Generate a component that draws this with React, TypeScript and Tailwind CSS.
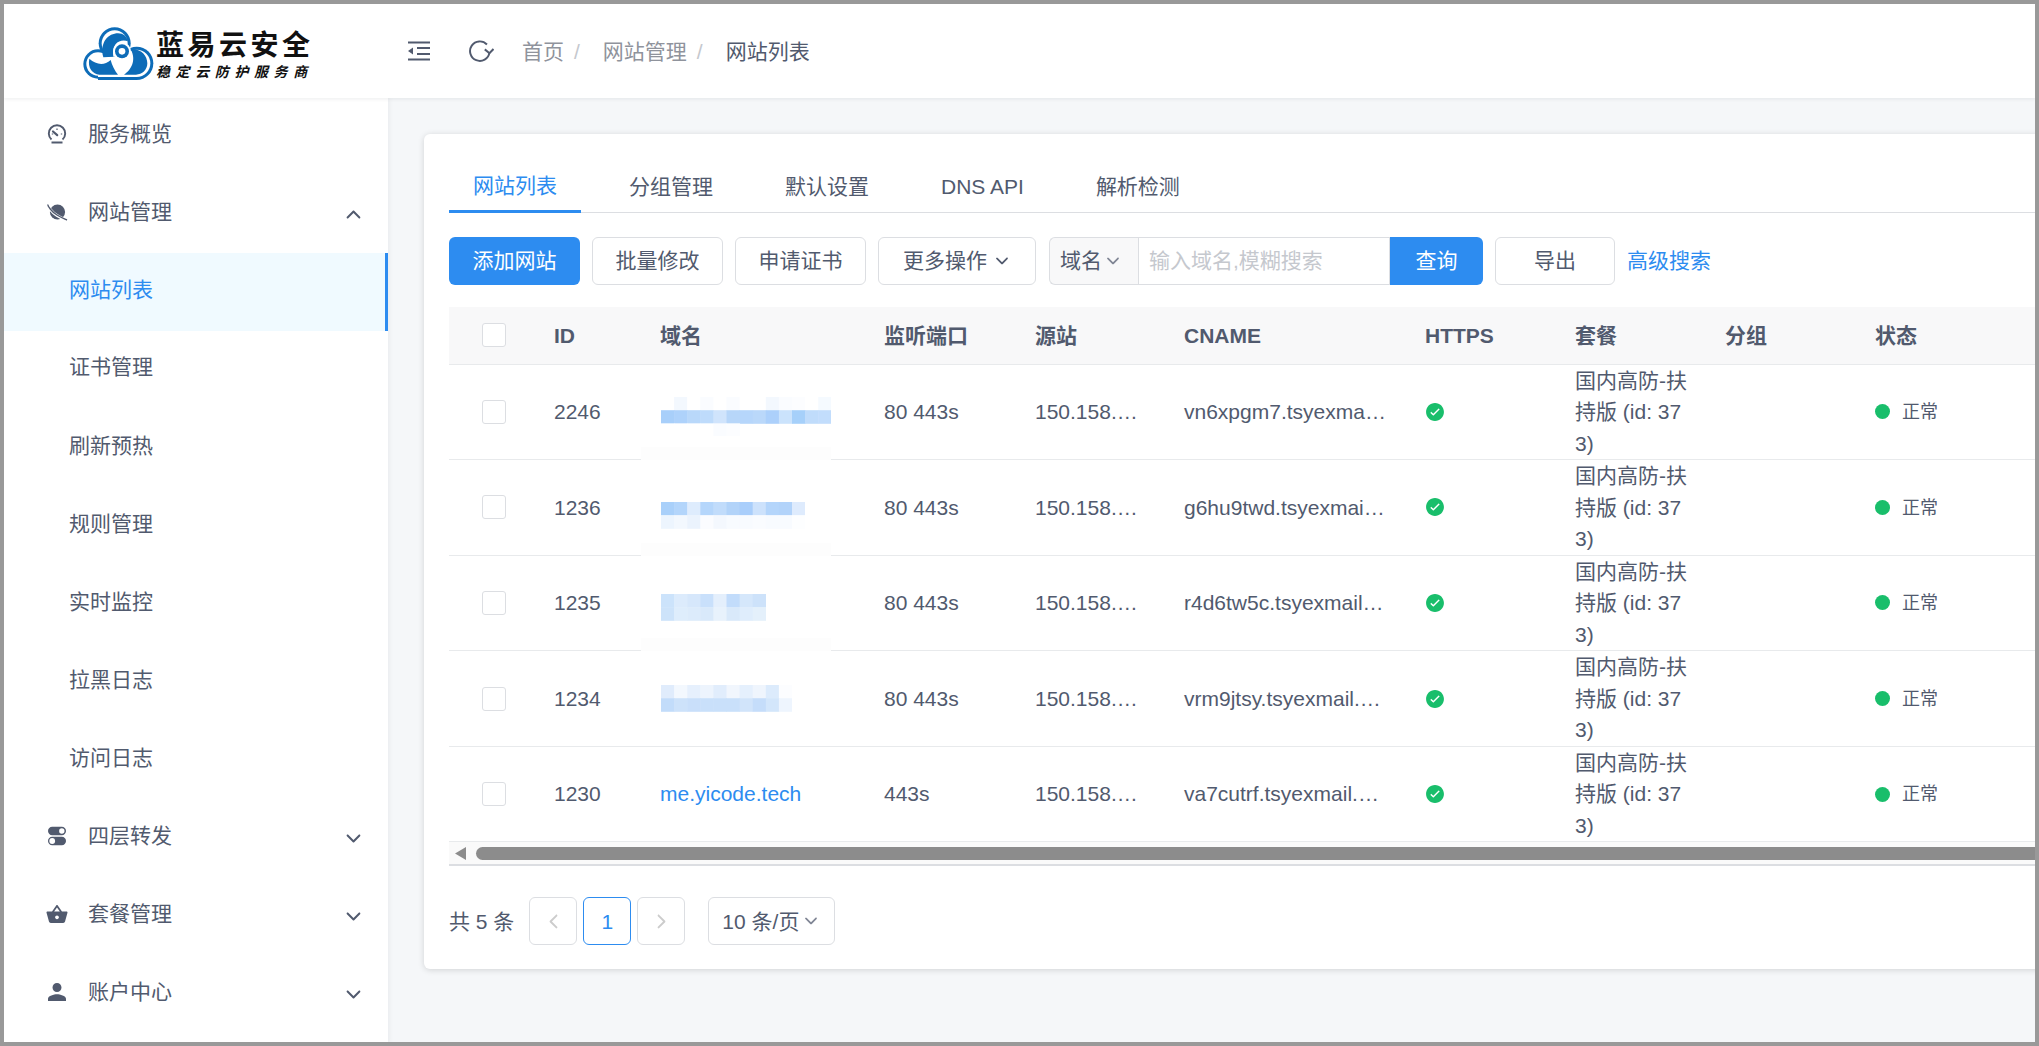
import { IoIosArrowBack, IoIosArrowDown, IoIosArrowForward, IoIosArrowUp, IoIosCheckmarkCircle, IoMdBasket, IoMdPerson } from 'react-icons/io';
import type { ComponentType } from 'react';

type NavItem = { label: string; icon?: ComponentType<{ className?: string }>; arrow?: 'up' | 'down'; active?: boolean; box?: string };

const GaugeIcon = ({ className }: { className?: string }) => (
  <svg viewBox="0 0 24 24" className={className} fill="none" stroke="currentColor">
    <path d="M6.5 17.5 A8.2 8.2 0 1 1 17.5 17.5" strokeWidth="1.9" />
    <path d="M8 9.5 L12.2 13.2" strokeWidth="2.2" strokeLinecap="round" />
    <path d="M12 6.5 V8 M17.2 12 H15.8 M6.8 12 H8.2" strokeWidth="1.2" />
    <path d="M6.5 20.5 H17.5" strokeWidth="2" />
  </svg>
);

const PlanetIcon = ({ className }: { className?: string }) => (
  <svg viewBox="0 0 24 24" className={className} fill="currentColor">
    <circle cx="12.5" cy="12" r="7.6" />
    <path d="M2.5 4 C2 6 7 12.5 12 15.5 C16.5 18.2 20 19.5 22 20.5" fill="none" stroke="#fff" strokeWidth="3" />
    <path d="M3 4.5 C2.5 6 7 12 12 15 C16.5 17.7 20 19 22 20" fill="none" stroke="currentColor" strokeWidth="1.4" />
  </svg>
);

const SwitchIcon = ({ className }: { className?: string }) => (
  <svg viewBox="0 0 24 24" className={className}>
    <rect x="3" y="2.8" width="18" height="8.4" rx="4.2" fill="currentColor" />
    <circle cx="16.8" cy="7" r="2.7" fill="#fff" />
    <rect x="3" y="12.8" width="18" height="8.4" rx="4.2" fill="currentColor" />
    <circle cx="7.2" cy="17" r="2.9" fill="#fff" />
  </svg>
);

const navItems: NavItem[] = [
  { label: '服务概览', icon: GaugeIcon },
  { label: '网站管理', icon: PlanetIcon, arrow: 'up', box: 'h-[80px] pb-[2px]' },
  { label: '网站列表', active: true, box: 'h-[78px] pb-[5px]' },
  { label: '证书管理', box: 'h-[76px] pb-[4px]' },
  { label: '刷新预热' },
  { label: '规则管理' },
  { label: '实时监控' },
  { label: '拉黑日志' },
  { label: '访问日志' },
  { label: '四层转发', icon: SwitchIcon, arrow: 'down' },
  { label: '套餐管理', icon: IoMdBasket, arrow: 'down' },
  { label: '账户中心', icon: IoMdPerson, arrow: 'down' },
];

type Mosaic = { rows: string[][]; top: string; mask: boolean };

const mosaics: Mosaic[] = [
  {
    top: 'mt-[9px]',
    mask: true,
    rows: [
      ['#ffffff', '#f3f8fe', '#ffffff', '#fafcff', '#ffffff', '#fafcff', '#ffffff', '#ffffff', '#f3f8fe', '#fafcff', '#fcfdff', '#ffffff', '#f5faff'],
      ['#a8cffa', '#aed2fb', '#b9d8fa', '#bedbfb', '#d0e4fc', '#b7d6f9', '#b6d6fb', '#bad8fa', '#acd0fb', '#cbe3fc', '#a6d0fa', '#c0dcfb', '#c2ddfc'],
      ['#ffffff', '#ffffff', '#ffffff', '#ffffff', '#fafcff', '#fcfdff'],
    ],
  },
  {
    top: 'mt-[16px]',
    mask: true,
    rows: [
      ['#a9d0fa', '#b3d5fb', '#deecfd', '#b5d6fb', '#c1dcfb', '#b2d3f9', '#a9cefb', '#cde2fc', '#b4d5fb', '#b2d3fa', '#deebfd'],
      ['#edf5fe', '#f3f8fe', '#ebf3fd', '#fbfcff', '#f4f8fe', '#f8fbff', '#f8fbff', '#fafcff', '#f8fbff', '#f8fbff', '#fdfeff'],
    ],
  },
  {
    top: 'mt-[9px]',
    mask: true,
    rows: [
      ['#cce3fb', '#dcebfc', '#d6e7fb', '#c9e0fb', '#e4effc', '#c2dcfb', '#d5e7fb', '#cde2fa'],
      ['#cde3fa', '#deedfc', '#dcebfb', '#d9e9fa', '#e8f2fc', '#d9e9fa', '#dfedfc', '#e4f0fb'],
    ],
  },
  {
    top: 'mt-0',
    mask: false,
    rows: [
      ['#e0ecfc', '#f3f8fe', '#e6f0fd', '#edf4fd', '#e1edfc', '#f1f6fd', '#e5f0fd', '#eff5fd', '#dcebfc', '#fcfdff'],
      ['#c2dcfa', '#cde2fa', '#c9dffa', '#c9e0fa', '#c9e0fa', '#c9e0fa', '#d1e4fa', '#c5ddfa', '#d3e6fb', '#eef5fe'],
    ],
  },
];

const sites = [
  { id: 2246, ports: '80 443s', cname: 'vn6xpgm7.tsyexmail.com', mosaic: mosaics[0] },
  { id: 1236, ports: '80 443s', cname: 'g6hu9twd.tsyexmail.com', mosaic: mosaics[1] },
  { id: 1235, ports: '80 443s', cname: 'r4d6tw5c.tsyexmail.com', mosaic: mosaics[2] },
  { id: 1234, ports: '80 443s', cname: 'vrm9jtsy.tsyexmail.com', mosaic: mosaics[3] },
  { id: 1230, ports: '443s', cname: 'va7cutrf.tsyexmail.com', domain: 'me.yicode.tech' },
];

const Logo = () => (
  <svg viewBox="20 14 216 168" className="w-[72px] h-[56px] shrink-0">
    <g fill="#0d6cb8">
      <circle cx="68" cy="128" r="44" />
      <circle cx="118" cy="66" r="48" />
      <circle cx="184" cy="126" r="50" />
      <rect x="68" y="110" width="116" height="66" />
    </g>
    <g fill="#fff">
      <circle cx="68" cy="128" r="35" />
      <circle cx="118" cy="66" r="39" />
      <circle cx="184" cy="126" r="41" />
      <rect x="68" y="105" width="116" height="62" />
    </g>
    <g fill="#0d6cb8">
      <path d="M42 112 C36 140 52 158 72 160 L128 160 C118 148 110 132 106 116 C86 134 62 130 42 112 Z" />
      <path d="M166 84 C196 80 216 102 216 126 C216 146 200 160 182 160 L146 160 C168 146 184 116 166 84 Z" />
      <path d="M84 108 C72 62 100 36 128 36 C144 36 154 44 158 60 C136 52 108 64 114 106 Z" />
    </g>
    <circle cx="140" cy="90" r="27" fill="#fff" />
    <circle cx="140" cy="90" r="21" fill="#0d6cb8" />
    <circle cx="140" cy="90" r="10" fill="#fff" />
  </svg>
);

const CollapseIcon = () => (
  <svg viewBox="0 0 22 20" className="w-[22px] h-[20px]" fill="#515a6e">
    <rect x="0" y="0.5" width="22" height="2" />
    <rect x="9" y="6" width="13" height="2" />
    <rect x="9" y="12" width="13" height="2" />
    <rect x="0" y="17.5" width="22" height="2" />
    <path d="M0 10 L5 6.5 V13.5 Z" />
  </svg>
);

const RefreshIcon = () => (
  <svg viewBox="0 0 24 22" className="w-[26px] h-[24px] ml-[38px]" fill="none" stroke="#515a6e" strokeWidth="1.8">
    <path d="M17.5 5 A9 9 0 1 0 19.8 12.5" />
    <path d="M15.5 9.5 L19.8 13 L23.5 9.2" />
  </svg>
);

const Checkbox = () => <span className="block w-6 h-6 bg-white border border-[#dcdee2] rounded-[3px]" />;

const Button = ({ children, className = '' }: { children: React.ReactNode; className?: string }) => (
  <button className={`h-12 rounded-md border border-[#dcdee2] bg-white text-[21px] text-[#515a6e] flex items-center justify-center ${className}`}>
    {children}
  </button>
);

const tabs = ['网站列表', '分组管理', '默认设置', 'DNS API', '解析检测'];
const headers = [
  { label: 'ID', width: 'w-[106px]' },
  { label: '域名', width: 'w-[224px]' },
  { label: '监听端口', width: 'w-[151px]' },
  { label: '源站', width: 'w-[149px]' },
  { label: 'CNAME', width: 'w-[241px]' },
  { label: 'HTTPS', width: 'w-[150px]' },
  { label: '套餐', width: 'w-[150px]' },
  { label: '分组', width: 'w-[150px]' },
  { label: '状态', width: 'w-[150px]' },
];

export default function App() {
  return (
    <div className="h-screen w-screen overflow-hidden border-4 border-[#999999] bg-[#f5f7f9] flex flex-col text-[21px] text-[#515a6e] font-['Liberation_Sans','Noto_Sans_CJK_SC',sans-serif]">
      <header className="relative z-10 h-[94px] shrink-0 bg-white shadow-[0_1px_4px_rgba(0,21,41,0.08)] flex items-center">
        <div className="w-[384px] shrink-0 flex items-center pl-[78px] pt-[5px]">
          <Logo />
          <div className="flex flex-col ml-[2px] mt-[3px] text-[#111111]">
            <span className="text-[28px] leading-[34px] font-bold tracking-[3.5px] whitespace-nowrap">蓝易云安全</span>
            <span className="text-[14px] leading-[18px] font-bold italic tracking-[5.6px] whitespace-nowrap">稳定云防护服务商</span>
          </div>
        </div>
        <div className="flex items-center ml-[20px]">
          <CollapseIcon />
          <RefreshIcon />
          <nav className="flex items-center ml-[28px] pt-[1px] whitespace-nowrap">
            <span className="text-[#8f939c]">首页</span>
            <span className="text-[#c5c8ce] ml-[10px] mr-[23px]">/</span>
            <span className="text-[#8f939c]">网站管理</span>
            <span className="text-[#c5c8ce] ml-[10px] mr-[23px]">/</span>
            <span>网站列表</span>
          </nav>
        </div>
      </header>

      <div className="flex flex-1 min-h-0">
        <aside className="w-[384px] shrink-0 bg-white -mt-[3px] shadow-[0_2px_6px_rgba(0,21,41,0.08)] z-[5]">
          {navItems.map((item) => {
            const Icon = item.icon;
            return (
              <div
                key={item.label}
                className={`${item.box ?? 'h-[78px]'} flex items-center ${item.active ? 'bg-[#f0faff] border-r-[3px] border-[#2d8cf0] text-[#2d8cf0]' : ''} ${Icon ? 'pl-[43px]' : 'pl-[65px]'} pr-[24px]`}
              >
                {Icon && <Icon className="w-[24px] h-[24px] shrink-0 -ml-[2px] mr-[19px]" />}
                <span className="flex-1">{item.label}</span>
                {item.arrow === 'up' && <IoIosArrowUp className="w-[21px] h-[21px] mt-[4px]" />}
                {item.arrow === 'down' && <IoIosArrowDown className="w-[21px] h-[21px] mt-[4px]" />}
              </div>
            );
          })}
        </aside>

        <main className="flex-1 min-w-0 overflow-hidden pl-[36px] pt-[36px]">
          <div className="w-[1760px] bg-white rounded-md shadow-[0_1px_6px_rgba(0,0,0,0.15)] px-[25px] pt-[24px] pb-[24px]">
            <div className="flex h-[55px] w-[1586px] border-b border-[#dcdee2]">
              {tabs.map((tab, i) => (
                <div
                  key={tab}
                  className={`h-[55px] px-6 mr-6 flex items-center pt-[3px] whitespace-nowrap ${i === 0 ? 'text-[#2d8cf0] border-b-[3px] border-[#2d8cf0]' : ''}`}
                >
                  {tab}
                </div>
              ))}
            </div>

            <div className="flex items-center mt-[24px]">
              <button className="h-12 w-[131px] rounded-md bg-[#2d8cf0] text-white text-[21px]">添加网站</button>
              <Button className="w-[131px] ml-3">批量修改</Button>
              <Button className="w-[131px] ml-3">申请证书</Button>
              <Button className="w-[158px] ml-3">
                更多操作
                <IoIosArrowDown className="w-[18px] h-[18px] ml-[6px]" />
              </Button>
              <div className="flex h-12 w-[434px] ml-[13px]">
                <div className="w-[89px] shrink-0 bg-[#f8f8f9] border border-r-0 border-[#dcdee2] rounded-l-md flex items-center pl-[10px]">
                  域名
                  <IoIosArrowDown className="w-[18px] h-[18px] ml-[2px] text-[#808695]" />
                </div>
                <input
                  placeholder="输入域名,模糊搜索"
                  className="w-[252px] h-12 border border-[#dcdee2] px-[10px] text-[21px] placeholder:text-[#c5c8ce] outline-none"
                />
                <button className="w-[93px] h-12 rounded-r-md bg-[#2d8cf0] text-white text-[21px]">查询</button>
              </div>
              <Button className="w-[120px] ml-3">导出</Button>
              <span className="ml-3 text-[#2d8cf0] whitespace-nowrap">高级搜索</span>
            </div>

            <div className="w-[1586px] overflow-hidden mt-[22px]">
              <table className="table-fixed w-[1700px] border-collapse text-left">
                <thead>
                  <tr className="h-[57px] bg-[#f8f8f9] border-b border-[#e8eaec]">
                    <th className="w-[81px] pl-[33px] font-normal">
                      <Checkbox />
                    </th>
                    {headers.map((h) => (
                      <th key={h.label} className={`${h.width} px-6 font-bold whitespace-nowrap`}>
                        {h.label}
                      </th>
                    ))}
                    <th className="w-[148px]" />
                  </tr>
                </thead>
                <tbody>
                  {sites.map((site) => (
                    <tr key={site.id} className="h-[95.6px] border-b border-[#e8eaec] leading-[31.5px]">
                      <td className="pl-[33px]">
                        <Checkbox />
                      </td>
                      <td className="px-6">{site.id}</td>
                      <td className="px-6 relative">
                        {site.mosaic ? (
                          <>
                            <svg
                              width={site.mosaic.rows[0].length * 13.1}
                              height={site.mosaic.rows.length * 13.2}
                              className={`block ml-px ${site.mosaic.top}`}
                            >
                              {site.mosaic.rows.map((row, r) =>
                                row.map((color, c) => <rect key={c} x={c * 13.1} y={r * 13.2} width={13.6} height={13.6} fill={color} />),
                              )}
                            </svg>
                            {site.mosaic.mask && <span className="absolute left-[5px] -bottom-px w-[190px] h-[13px] bg-[#fdfdfd]" />}
                          </>
                        ) : (
                          <span className="text-[#2d8cf0]">{site.domain}</span>
                        )}
                      </td>
                      <td className="px-6">{site.ports}</td>
                      <td className="pl-6 pr-[16px] truncate">150.158.47.132</td>
                      <td className="pl-6 pr-[12px] truncate">{site.cname}</td>
                      <td className="px-6">
                        <IoIosCheckmarkCircle className="w-[22px] h-[22px] -ml-[1px] text-[#19be6b]" />
                      </td>
                      <td className="pl-6 pr-[12px] break-all">国内高防-扶持版 (id: 373)</td>
                      <td className="px-6" />
                      <td className="px-6">
                        <div className="flex items-center text-[18px]">
                          <span className="w-[15px] h-[15px] rounded-full bg-[#19be6b] mr-[12px]" />
                          <span className="pt-[2px]">正常</span>
                        </div>
                      </td>
                      <td />
                    </tr>
                  ))}
                </tbody>
              </table>
              <div className="h-[24px] bg-[#fafafa] border-b-2 border-[#dcdee2] flex items-start pt-[5px] pl-[6px]">
                <svg viewBox="0 0 11 13" className="w-[11px] h-[13px] shrink-0" fill="#8c8c8c">
                  <path d="M0 6.5 L11 0 V13 Z" />
                </svg>
                <div className="h-[13px] flex-1 ml-[10px] bg-[#8c8c8c] rounded-l-full" />
              </div>
            </div>

            <div className="flex items-center mt-[31px]">
              <span className="mr-[15px] whitespace-nowrap">共 5 条</span>
              <button className="w-12 h-12 rounded-md border border-[#dcdee2] flex items-center justify-center text-[#cccccc]">
                <IoIosArrowBack className="w-[21px] h-[21px]" />
              </button>
              <button className="w-12 h-12 ml-[6px] rounded-md border border-[#2d8cf0] text-[#2d8cf0] text-[21px]">1</button>
              <button className="w-12 h-12 ml-[6px] rounded-md border border-[#dcdee2] flex items-center justify-center text-[#cccccc]">
                <IoIosArrowForward className="w-[21px] h-[21px]" />
              </button>
              <div className="w-[127px] h-12 ml-[23px] rounded-md border border-[#dcdee2] flex items-center pl-[13px] whitespace-nowrap">
                10 条/页
                <IoIosArrowDown className="w-[18px] h-[18px] ml-[3px] text-[#808695]" />
              </div>
            </div>
          </div>
        </main>
      </div>
    </div>
  );
}
